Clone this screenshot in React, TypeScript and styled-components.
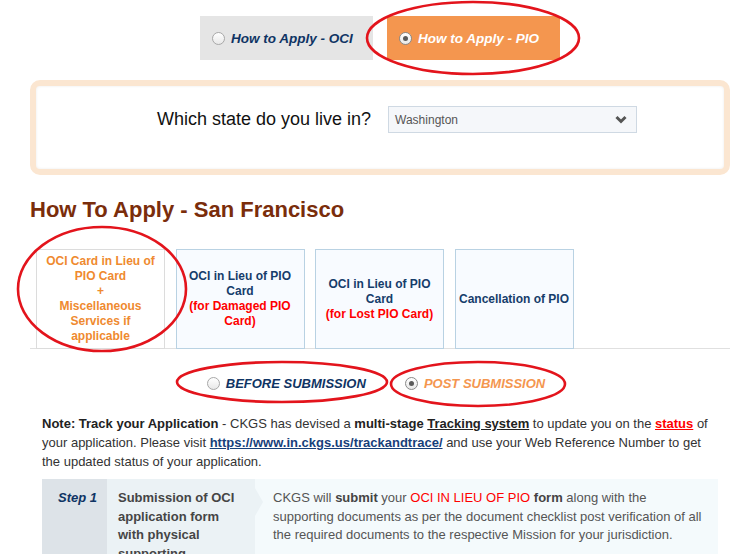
import React from 'react';
import styled, { createGlobalStyle } from 'styled-components';

const GlobalStyle = createGlobalStyle`
  html, body {
    margin: 0;
    padding: 0;
    background: #fff;
  }
  body {
    font-family: "Liberation Sans", Arial, sans-serif;
    color: #444;
  }
`;

const Page = styled.div`
  position: relative;
  width: 753px;
  height: 554px;
  overflow: hidden;
`;

const Container = styled.div`
  width: 700px;
  margin-left: 30px;
  padding-top: 16px;
`;

/* ---------- top OCI / PIO switch ---------- */

const Switch = styled.div`
  display: flex;
  justify-content: center;
  gap: 14px;
`;

const SwitchOption = styled.div<{ $active?: boolean }>`
  width: 173px;
  height: 44px;
  box-sizing: border-box;
  display: flex;
  align-items: center;
  gap: 6px;
  padding-left: 12px;
  background: ${(p) => (p.$active ? '#f4964f' : '#e5e5e5')};
  color: ${(p) => (p.$active ? '#fff' : '#0f3464')};
  font-size: 13.5px;
  font-weight: bold;
  font-style: italic;
`;

const Radio = styled.span<{ $checked?: boolean }>`
  flex: none;
  width: 13px;
  height: 13px;
  box-sizing: border-box;
  border-radius: 50%;
  border: 1px solid ${(p) => (p.$checked ? '#8a8a8a' : '#a8a8a8')};
  background: linear-gradient(#ffffff, #e8e8e8);
  display: inline-flex;
  align-items: center;
  justify-content: center;

  &::after {
    content: '';
    width: 5px;
    height: 5px;
    border-radius: 50%;
    background: ${(p) => (p.$checked ? '#5a5a5a' : 'transparent')};
  }
`;

/* ---------- state picker ---------- */

const StateBox = styled.div`
  margin-top: 20px;
  height: 95px;
  box-sizing: border-box;
  border: 6px solid #fbe6d1;
  border-radius: 10px;
  background: #fff;
  box-shadow: inset 0 0 3px rgba(0, 0, 0, 0.08);
  display: flex;
  justify-content: center;
  align-items: flex-start;
  gap: 17px;
  padding: 20px 0 0 34px;
`;

const StateLabel = styled.label`
  font-size: 18px;
  color: #111;
  line-height: 27px;
`;

const Select = styled.div`
  width: 249px;
  height: 27px;
  box-sizing: border-box;
  border: 1px solid #cfd9e3;
  background: #f5f7fa;
  display: flex;
  align-items: center;
  justify-content: space-between;
  padding: 0 9px 0 6px;
  font-size: 12px;
  color: #555;
`;

/* ---------- heading + tabs ---------- */

const Heading = styled.h2`
  margin: 22px 0 0 0;
  font-size: 22px;
  line-height: 25px;
  font-weight: bold;
  color: #7a2d0b;
`;

const TabRow = styled.div`
  margin-top: 27px;
  display: flex;
  align-items: flex-end;
  gap: 10.5px;
  padding-left: 6px;
  height: 99px;
  border-bottom: 1px solid #e0e0e0;
`;

const Tab = styled.div<{ $active?: boolean; $width: number; $pad?: number }>`
  width: ${(p) => p.$width}px;
  height: 100px;
  margin-bottom: -1px;
  box-sizing: border-box;
  padding: 0 ${(p) => p.$pad ?? 7}px;
  border: 1px solid ${(p) => (p.$active ? '#dcdcdc' : '#b9d2e3')};
  background: ${(p) => (p.$active ? '#fff' : '#f8fbff')};
  display: flex;
  align-items: center;
  justify-content: center;
  text-align: center;
  font-size: 12px;
  line-height: 15px;
  font-weight: bold;
  color: ${(p) => (p.$active ? '#ef8a2f' : '#163d6b')};
`;

const RedNote = styled.span`
  color: #ff0000;
`;

/* ---------- before / post submission ---------- */

const StageRow = styled.div`
  margin-top: 24px;
  height: 20px;
  display: flex;
  justify-content: center;
  align-items: center;
  gap: 39px;
  padding-right: 8px;
`;

const Stage = styled.div<{ $active?: boolean }>`
  display: flex;
  align-items: center;
  gap: 6px;
  font-size: 13px;
  font-weight: bold;
  font-style: italic;
  color: ${(p) => (p.$active ? '#f4964f' : '#0f3464')};
`;

/* ---------- note ---------- */

const Note = styled.p`
  margin: 21px 12px 0 12px;
  font-size: 13px;
  line-height: 19px;
  color: #333;

  b {
    color: #222;
  }
`;

const Underlined = styled.b`
  text-decoration: underline;
`;

const StatusLink = styled.a`
  color: #ff0000;
  font-weight: bold;
  text-decoration: underline;
`;

const TrackLink = styled.a`
  color: #17407a;
  font-weight: bold;
  text-decoration: underline;
`;

/* ---------- steps ---------- */

const StepRow = styled.div`
  margin: 8px 12px 0 12px;
  display: flex;
  min-height: 90px;
`;

const StepNo = styled.div`
  width: 65px;
  flex: none;
  box-sizing: border-box;
  padding: 10px 0 0 16px;
  background: #dde3e8;
  font-size: 13px;
  line-height: 18px;
  font-weight: bold;
  font-style: italic;
  color: #0f3464;
  position: relative;

  &::after {
    content: '';
    position: absolute;
    right: -7px;
    top: 11px;
    border-style: solid;
    border-width: 9px 0 9px 7px;
    border-color: transparent transparent transparent #dde3e8;
  }
`;

const StepTitle = styled.div`
  width: 148px;
  flex: none;
  box-sizing: border-box;
  padding: 10px 20px 0 11px;
  background: #ebf2f5;
  font-size: 13px;
  line-height: 18.5px;
  font-weight: bold;
  color: #454545;
  position: relative;

  &::after {
    content: '';
    position: absolute;
    right: -8px;
    top: 9px;
    border-style: solid;
    border-width: 14px 0 14px 8px;
    border-color: transparent transparent transparent #ebf2f5;
  }
`;

const StepText = styled.div`
  flex: 1;
  box-sizing: border-box;
  padding: 10px 9px 0 18px;
  background: #f4fafc;
  font-size: 13px;
  line-height: 18.5px;
  color: #555;

  b {
    color: #444;
  }
`;

/* ---------- red annotation marks ---------- */

const Marks = styled.svg`
  position: absolute;
  left: 0;
  top: 0;
  pointer-events: none;
`;

function Chevron() {
  return (
    <svg width="12" height="9" viewBox="0 0 12 9">
      <polyline points="1.5,2 6,6.5 10.5,2" fill="none" stroke="#555" strokeWidth="3" />
    </svg>
  );
}

export default function App() {
  return (
    <Page>
      <GlobalStyle />
      <Container>
        <Switch>
          <SwitchOption>
            <Radio />
            How to Apply - OCI
          </SwitchOption>
          <SwitchOption $active>
            <Radio $checked />
            How to Apply - PIO
          </SwitchOption>
        </Switch>

        <StateBox>
          <StateLabel>Which state do you live in?</StateLabel>
          <Select>
            <span>Washington</span>
            <Chevron />
          </Select>
        </StateBox>

        <Heading>How To Apply - San Francisco</Heading>

        <TabRow>
          <Tab $active $width={129}>
            <span>
              OCI Card in Lieu of
              <br />
              PIO Card
              <br />+<br />
              Miscellaneous
              <br />
              Services if
              <br />
              applicable
            </span>
          </Tab>
          <Tab $width={129}>
            <span>
              OCI in Lieu of PIO
              <br />
              Card
              <br />
              <RedNote>(for Damaged PIO Card)</RedNote>
            </span>
          </Tab>
          <Tab $width={129}>
            <span>
              OCI in Lieu of PIO
              <br />
              Card
              <br />
              <RedNote>(for Lost PIO Card)</RedNote>
            </span>
          </Tab>
          <Tab $width={119} $pad={2}>
            Cancellation of PIO
          </Tab>
        </TabRow>

        <StageRow>
          <Stage>
            <Radio />
            BEFORE SUBMISSION
          </Stage>
          <Stage $active>
            <Radio $checked />
            POST SUBMISSION
          </Stage>
        </StageRow>

        <Note>
          <b>Note: Track your Application</b> - CKGS has devised a <b>multi-stage</b>{' '}
          <Underlined>Tracking system</Underlined> to update you on the <StatusLink>status</StatusLink> of your
          application. Please visit <TrackLink>https://www.in.ckgs.us/trackandtrace/</TrackLink> and use your Web
          Reference Number to get the updated status of your application.
        </Note>

        <StepRow>
          <StepNo>Step 1</StepNo>
          <StepTitle>Submission of OCI application form with physical supporting documents</StepTitle>
          <StepText>
            CKGS will <b>submit</b> your <RedNote>OCI IN LIEU OF PIO</RedNote> <b>form</b> along with the
            supporting documents as per the document checklist post verification of all the required documents to
            the respective Mission for your jurisdiction.
          </StepText>
        </StepRow>
      </Container>

      <Marks width="753" height="554" viewBox="0 0 753 554">
        <g fill="none" stroke="#e3141c" strokeWidth="2.6">
          <ellipse cx="473" cy="38" rx="106" ry="36" />
          <ellipse cx="102" cy="289" rx="84" ry="62" />
          <ellipse cx="282" cy="382" rx="105" ry="20" />
          <ellipse cx="478" cy="384" rx="87" ry="22" />
        </g>
      </Marks>
    </Page>
  );
}
